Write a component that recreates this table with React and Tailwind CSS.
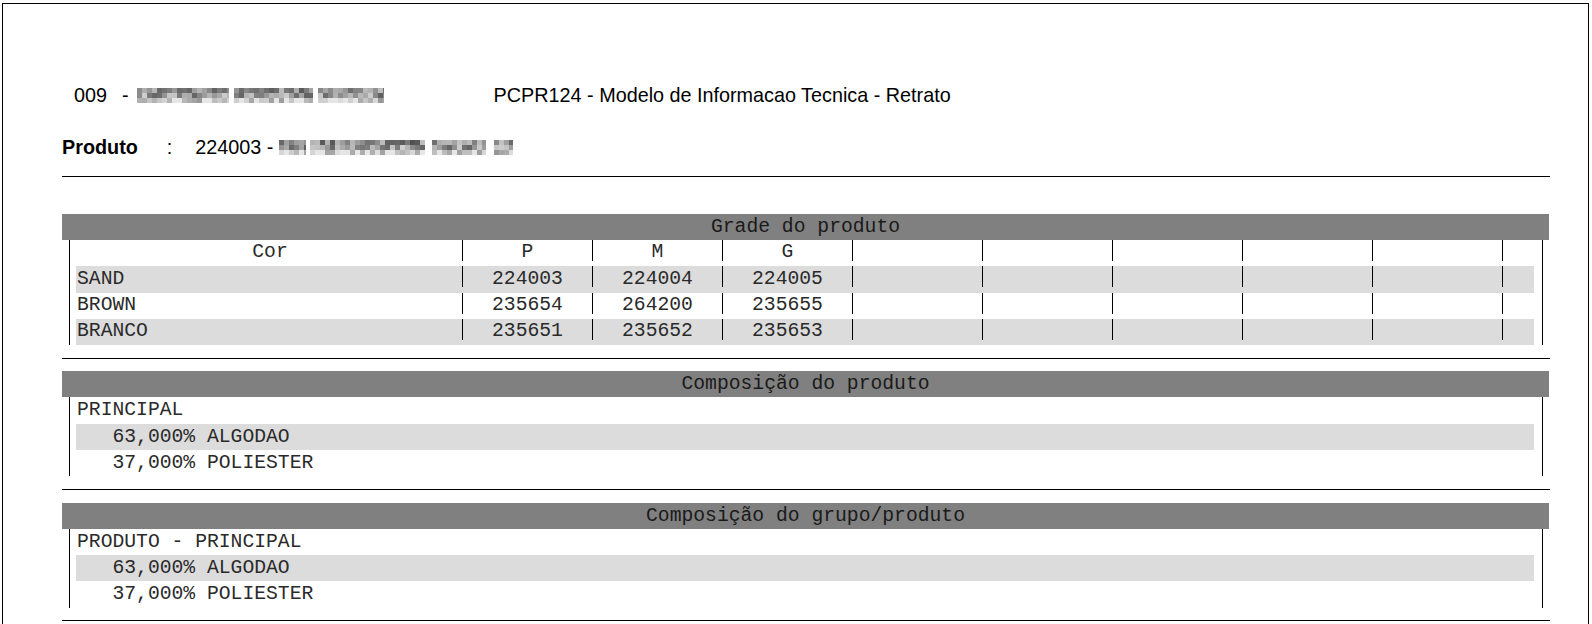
import React from "react"

// pixelated "blurred" text, like the masked names in the printout
function Mosaic({ segments, seed = 1 }) {
  return (
    <div className="flex items-center">
      {segments.map((seg, i) => {
        if (seg.gap) return <div key={i} style={{ width: seg.gap }} className="h-[15px]" />
        const cols = Math.ceil(seg.w / 5)
        return (
          <div key={i} style={{ width: seg.w }} className="h-[15px] overflow-hidden flex flex-col">
            {[0, 1, 2].map((r) => (
              <div key={r} className="flex h-[5px] shrink-0">
                {Array.from({ length: cols }).map((_, c) => {
                  const n = Math.sin((c + 1 + i * 17) * 12.9898 + (r + 1) * 78.233 + seed * 3.1) * 43758.5453
                  const f = n - Math.floor(n)
                  const base = r === 2 ? 150 : r === 0 ? 80 : 95
                  const v = Math.min(230, Math.round(base + f * 115))
                  return (
                    <div
                      key={c}
                      className="w-[5px] h-[5px] shrink-0"
                      style={{ backgroundColor: `rgb(${v},${v},${v})` }}
                    />
                  )
                })}
              </div>
            ))}
          </div>
        )
      })}
    </div>
  )
}

function Section({ title, children }) {
  return (
    <div>
      <div className="w-[1487px] h-[26px] bg-[#808080] flex items-center justify-center pt-[2px] text-[#1a1a1a]">
        <span className="whitespace-pre leading-none">{title}</span>
      </div>
      <div className="ml-[7px] w-[1474px] border-l border-r border-black pl-[6px] pr-[8px]">{children}</div>
    </div>
  )
}

function Sep() {
  return <div className="w-px h-[21px] bg-black shrink-0 self-start" />
}

function GradeRow({ cor, values, band, height, header }) {
  const cells = [...values, "", "", "", "", "", ""]
  return (
    <div className={`flex ${band ? "bg-[#dcdcdc]" : ""}`} style={{ height }}>
      <div className={`w-[386px] shrink-0 flex items-center ${header ? "justify-center pl-[2px]" : "pl-[1px]"}`}>
        <span className="leading-none">{cor}</span>
      </div>
      {cells.map((v, i) => (
        <div key={i} className="w-[130px] shrink-0 flex">
          <Sep />
          <div className="flex-1 flex items-center justify-center">
            <span className="leading-none">{v}</span>
          </div>
        </div>
      ))}
      <div className="w-[32px] shrink-0 flex">
        <Sep />
      </div>
    </div>
  )
}

function TextRow({ text, band, height }) {
  return (
    <div className={`flex items-center pl-[1px] pt-[1px] ${band ? "bg-[#dcdcdc]" : ""}`} style={{ height }}>
      <span className="whitespace-pre leading-none">{text}</span>
    </div>
  )
}

export default function App() {
  return (
    <div className="w-[1592px] h-[624px] overflow-hidden bg-white text-black">
      <div className="ml-[2px] mt-[3px] w-[1587px] h-[700px] border-l border-t border-r border-black">
        <div className="ml-[59px] w-[1488px]">
          {/* report heading */}
          <div className="mt-[80px] h-[22px] flex items-center font-['Liberation_Sans',Arial,sans-serif] text-[19.8px] leading-[22px]">
            <span className="ml-[12px]">009</span>
            <span className="ml-[15px]">-</span>
            <div className="ml-[8px]">
              <Mosaic seed={2} segments={[{ w: 92 }, { gap: 5 }, { w: 79 }, { gap: 5 }, { w: 66 }]} />
            </div>
            <span className="ml-[110px]">PCPR124 - Modelo de Informacao Tecnica - Retrato</span>
          </div>

          <div className="mt-[30px] h-[22px] flex items-center font-['Liberation_Sans',Arial,sans-serif] text-[19.8px] leading-[22px]">
            <span className="font-bold">Produto</span>
            <span className="ml-[29px]">:</span>
            <span className="ml-[23px]">224003 -</span>
            <div className="ml-[6px]">
              <Mosaic
                seed={5}
                segments={[{ w: 27 }, { gap: 4 }, { w: 115 }, { gap: 7 }, { w: 54 }, { gap: 8 }, { w: 19 }]}
              />
            </div>
          </div>

          <div className="mt-[18px] w-[1488px] h-px bg-black" />

          <div className="font-['Liberation_Mono','Courier_New',monospace] text-[19.7px] text-[#2a2a2a]">
            <div className="mt-[37px]">
              <Section title="Grade do produto">
                <GradeRow header cor="Cor" values={["P", "M", "G"]} height={26} />
                <GradeRow band cor="SAND" values={["224003", "224004", "224005"]} height={27} />
                <GradeRow cor="BROWN" values={["235654", "264200", "235655"]} height={26} />
                <GradeRow band cor="BRANCO" values={["235651", "235652", "235653"]} height={26} />
              </Section>
            </div>

            <div className="mt-[13px] w-[1488px] h-px bg-black" />

            <div className="mt-[12px]">
              <Section title="Composição do produto">
                <TextRow text="PRINCIPAL" height={27} />
                <TextRow band text="   63,000% ALGODAO" height={26} />
                <TextRow text="   37,000% POLIESTER" height={26} />
              </Section>
            </div>

            <div className="mt-[13px] w-[1488px] h-px bg-black" />

            <div className="mt-[13px]">
              <Section title="Composição do grupo/produto">
                <TextRow text="PRODUTO - PRINCIPAL" height={26} />
                <TextRow band text="   63,000% ALGODAO" height={26} />
                <TextRow text="   37,000% POLIESTER" height={27} />
              </Section>
            </div>

            <div className="mt-[12px] w-[1488px] h-px bg-black" />
          </div>
        </div>
      </div>
    </div>
  )
}
